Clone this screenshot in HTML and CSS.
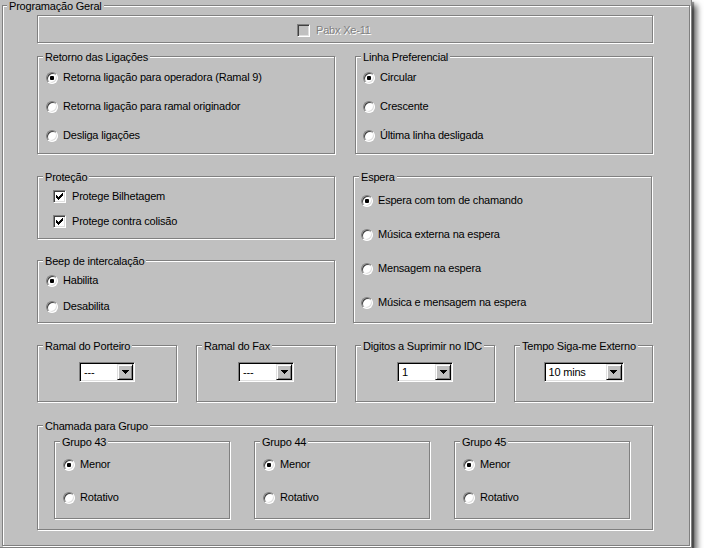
FILE: index.html
```html
<!DOCTYPE html>
<html lang="pt">
<head>
<meta charset="utf-8">
<title>Programação Geral</title>
<link rel="stylesheet" href="styles.css">
</head>
<body>
<div class="window">
  <div class="group outer">
    <span class="title">Programação Geral</span>

    <div class="group pabx">
      <div class="opt opt-check disabled">
        <span class="cb"></span><span class="lbl">Pabx Xe-11</span>
      </div>
    </div>

    <div class="row row-2">
      <div class="group g-half">
        <span class="title">Retorno das Ligações</span>
        <div class="opts opts-3">
          <div class="opt"><span class="radio on"></span>Retorna ligação para operadora (Ramal 9)</div>
          <div class="opt"><span class="radio"></span>Retorna ligação para ramal originador</div>
          <div class="opt"><span class="radio"></span>Desliga ligações</div>
        </div>
      </div>
      <div class="group g-half">
        <span class="title">Linha Preferencial</span>
        <div class="opts opts-3 opts-r">
          <div class="opt"><span class="radio on"></span>Circular</div>
          <div class="opt"><span class="radio"></span>Crescente</div>
          <div class="opt"><span class="radio"></span>Última linha desligada</div>
        </div>
      </div>
    </div>

    <div class="row row-3">
      <div class="col">
        <div class="group g-protecao">
          <span class="title">Proteção</span>
          <div class="opts opts-check">
            <div class="opt opt-check"><span class="cb"><svg width="7" height="7" viewBox="0 0 7 7" shape-rendering="crispEdges"><path d="M0 2H1V3H2V4H3V3H4V2H5V1H6V0H7V3H6V4H5V5H4V6H3V7H2V6H1V5H0Z" fill="#000"/></svg></span>Protege Bilhetagem</div>
            <div class="opt opt-check"><span class="cb"><svg width="7" height="7" viewBox="0 0 7 7" shape-rendering="crispEdges"><path d="M0 2H1V3H2V4H3V3H4V2H5V1H6V0H7V3H6V4H5V5H4V6H3V7H2V6H1V5H0Z" fill="#000"/></svg></span>Protege contra colisão</div>
          </div>
        </div>
        <div class="group g-beep">
          <span class="title">Beep de intercalação</span>
          <div class="opts opts-beep">
            <div class="opt"><span class="radio on"></span>Habilita</div>
            <div class="opt"><span class="radio"></span>Desabilita</div>
          </div>
        </div>
      </div>
      <div class="group g-espera">
        <span class="title">Espera</span>
        <div class="opts opts-espera opts-r">
          <div class="opt"><span class="radio on"></span>Espera com tom de chamando</div>
          <div class="opt"><span class="radio"></span>Música externa na espera</div>
          <div class="opt"><span class="radio"></span>Mensagem na espera</div>
          <div class="opt"><span class="radio"></span>Música e mensagem na espera</div>
        </div>
      </div>
    </div>

    <div class="row row-4">
      <div class="group g-small">
        <span class="title">Ramal do Porteiro</span>
        <div class="combo"><span class="val">---</span><span class="btn"><svg width="7" height="4" viewBox="0 0 7 4" shape-rendering="crispEdges"><path d="M0 0H7V1H6V2H5V3H4V4H3V3H2V2H1V1H0Z" fill="#000"/></svg></span></div>
      </div>
      <div class="group g-small">
        <span class="title">Ramal do Fax</span>
        <div class="combo"><span class="val">---</span><span class="btn"><svg width="7" height="4" viewBox="0 0 7 4" shape-rendering="crispEdges"><path d="M0 0H7V1H6V2H5V3H4V4H3V3H2V2H1V1H0Z" fill="#000"/></svg></span></div>
      </div>
      <div class="group g-small">
        <span class="title">Digitos a Suprimir no IDC</span>
        <div class="combo"><span class="val">1</span><span class="btn"><svg width="7" height="4" viewBox="0 0 7 4" shape-rendering="crispEdges"><path d="M0 0H7V1H6V2H5V3H4V4H3V3H2V2H1V1H0Z" fill="#000"/></svg></span></div>
      </div>
      <div class="group g-small g-last">
        <span class="title">Tempo Siga-me Externo</span>
        <div class="combo combo-wide"><span class="val">10 mins</span><span class="btn"><svg width="7" height="4" viewBox="0 0 7 4" shape-rendering="crispEdges"><path d="M0 0H7V1H6V2H5V3H4V4H3V3H2V2H1V1H0Z" fill="#000"/></svg></span></div>
      </div>
    </div>

    <div class="group g-chamada">
      <span class="title">Chamada para Grupo</span>
      <div class="group g-grupo">
        <span class="title">Grupo 43</span>
        <div class="opts opts-grupo">
          <div class="opt"><span class="radio on"></span>Menor</div>
          <div class="opt"><span class="radio"></span>Rotativo</div>
        </div>
      </div>
      <div class="group g-grupo">
        <span class="title">Grupo 44</span>
        <div class="opts opts-grupo">
          <div class="opt"><span class="radio on"></span>Menor</div>
          <div class="opt"><span class="radio"></span>Rotativo</div>
        </div>
      </div>
      <div class="group g-grupo">
        <span class="title">Grupo 45</span>
        <div class="opts opts-grupo">
          <div class="opt"><span class="radio on"></span>Menor</div>
          <div class="opt"><span class="radio"></span>Rotativo</div>
        </div>
      </div>
    </div>
  </div>
</div>
</body>
</html>
```

FILE: styles.css
```css
* { box-sizing: border-box; }

body {
  margin: 0;
  background: #fff;
  font-family: "Liberation Sans", Arial, sans-serif;
  font-size: 11px;
  letter-spacing: -0.2px;
  color: #000;
}

.window {
  width: 692px;
  height: 548px;
  background: #c0c0c0;
  padding: 5px 0 0 2px;
  border-right: 1px solid #808080;
  border-bottom: 1px solid #808080;
  box-shadow: 2px 2px 1px rgba(0, 0, 0, 0.35), 5px 5px 6px rgba(0, 0, 0, 0.6);
}

/* etched group box */
.group {
  position: relative;
  border: 1px solid #808080;
  box-shadow: inset 1px 1px 0 #fff, 1px 1px 0 #fff;
}

.title {
  position: absolute;
  top: -6px;
  left: 5px;
  padding: 0 2px;
  background: #c0c0c0;
  line-height: 13px;
  white-space: nowrap;
}

.outer {
  width: 688px;
  height: 541px;
  padding: 9px 0 0 34px;
}
.outer > .title { left: 4px; }

.pabx {
  width: 616px;
  height: 28px;
  display: flex;
  align-items: center;
  padding: 3px 0 0 259px;
}

.row { display: flex; }
.row-2 { margin-top: 13px; gap: 20px; }
.row-3 { margin-top: 22px; gap: 18px; }
.row-4 { margin-top: 22px; gap: 19px; }

.col { display: flex; flex-direction: column; width: 298px; }

.g-half { width: 298px; height: 98px; }
.g-protecao { height: 63px; }
.g-beep { height: 63px; margin-top: 21px; }
.g-espera { width: 299px; height: 147px; }

.g-small {
  width: 140px;
  height: 57px;
  display: flex;
  justify-content: center;
  align-items: flex-start;
  padding-top: 16px;
}
.g-last { width: 139px; }

.g-chamada {
  width: 616px;
  height: 105px;
  margin-top: 23px;
  display: flex;
  gap: 24px;
  padding: 15px 0 0 16px;
}
.g-grupo { width: 176px; height: 78px; }

/* option lists */
.opts {
  display: flex;
  flex-direction: column;
  padding-left: 8px;
}
.opts-r { padding-left: 7px; }
.opts-3 { padding-top: 14px; gap: 16px; }
.opts-beep { padding-top: 13px; gap: 13px; }
.opts-check { padding: 13px 0 0 15px; gap: 12px; }
.opts-espera { padding-top: 17px; gap: 21px; }
.opts-grupo { padding-top: 16px; gap: 20px; }

.opt {
  display: flex;
  align-items: center;
  height: 13px;
  line-height: 13px;
  gap: 5px;
  white-space: nowrap;
}
.opt-check { gap: 6px; }

.radio {
  width: 12px;
  height: 12px;
  flex: none;
  border-radius: 50%;
  border: 1px solid;
  border-color: #808080 #fff #fff #808080;
  background: #fff;
  box-shadow: inset 1px 1px 0 #404040, inset -1px -1px 0 #dfdfdf;
  display: flex;
  align-items: center;
  justify-content: center;
}
.radio.on::after {
  content: "";
  width: 4px;
  height: 4px;
  border-radius: 1px;
  background: #000;
}

.cb {
  width: 13px;
  height: 13px;
  flex: none;
  border: 1px solid;
  border-color: #808080 #fff #fff #808080;
  box-shadow: inset 1px 1px 0 #404040, inset -1px -1px 0 #dfdfdf;
  background: #fff;
  display: flex;
  align-items: center;
  justify-content: center;
}
.cb svg { display: block; }

.disabled .cb { background: #c0c0c0; }
.disabled .lbl { color: #808080; text-shadow: 1px 1px 0 #fff; }

/* combo box */
.combo {
  display: flex;
  width: 56px;
  height: 20px;
  border: 1px solid;
  border-color: #808080 #fff #fff #808080;
  box-shadow: inset 1px 1px 0 #000, inset -1px -1px 0 #dfdfdf;
  background: #fff;
  padding: 1px;
}
.combo-wide { width: 80px; }
.combo .val {
  flex: 1;
  padding-left: 3px;
  line-height: 16px;
  white-space: nowrap;
  overflow: hidden;
}
.combo .btn {
  width: 16px;
  height: 16px;
  flex: none;
  background: #c0c0c0;
  border: 1px solid;
  border-color: #dfdfdf #000 #000 #dfdfdf;
  box-shadow: inset 1px 1px 0 #fff, inset -1px -1px 0 #808080;
  display: flex;
  align-items: center;
  justify-content: center;
}
.combo .btn svg { display: block; }
```
